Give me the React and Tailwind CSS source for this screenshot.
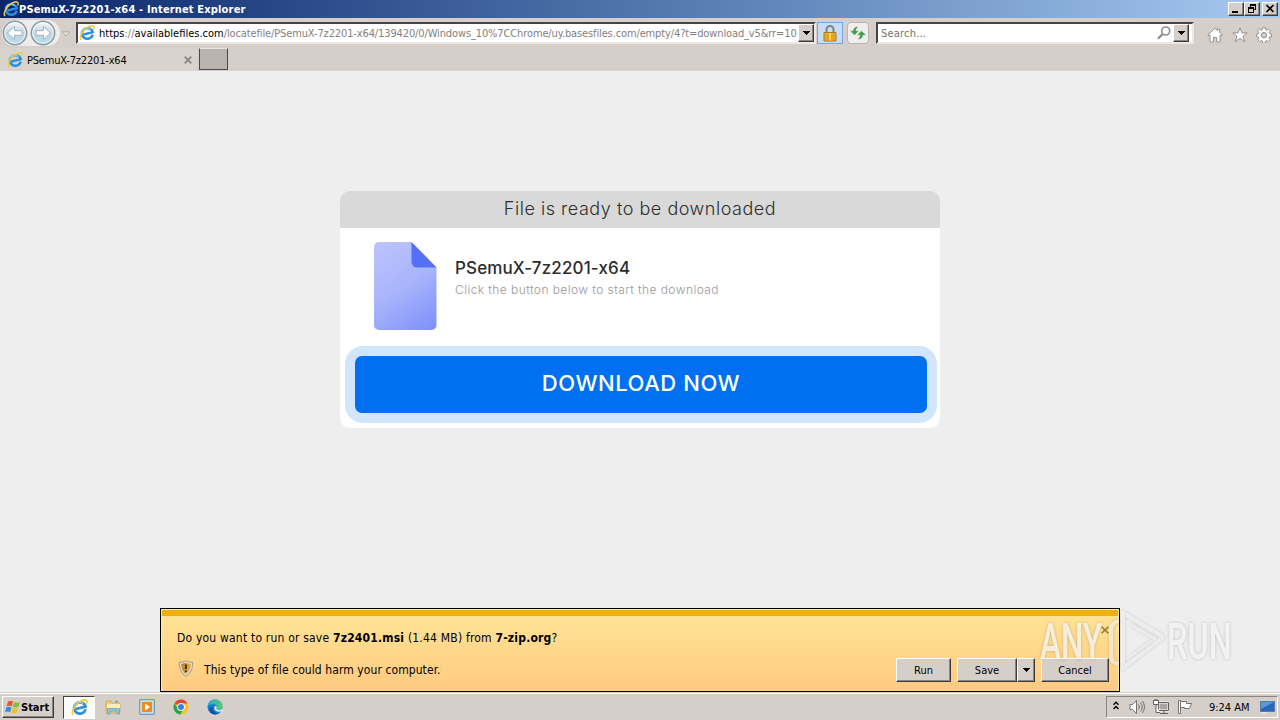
import { clsx } from "clsx";

/**
 * Internet Explorer window with a download page, plus the desktop taskbar.
 */

const bevel =
  "bg-[#d6cfc9] border border-t-white border-l-white border-r-[#403a3a] border-b-[#403a3a] shadow-[inset_-1px_-1px_0_#8b8580]";
const sunken =
  "bg-white border-2 border-t-[#4a4244] border-l-[#4a4244] border-r-[#ece8e4] border-b-[#ece8e4]";

function IeIcon({ className }) {
  return (
    <svg viewBox="0 0 16 16" className={className} fill="none">
      <g transform="rotate(-14 8 8.5)">
        <path d="M13.3 11A5.500 5.300 0 1 1 13.900 8.600H4.500" stroke="#2a8fdc" strokeWidth="2.500" />
        <path d="M3 7A5 5 0 0 1 12.500 6" stroke="#7fd0f5" strokeWidth="1.100" />
      </g>
      <path d="M2.200 15C-1.500 12.500 6.500 1 13 .8c2.700 0 2.300 2.200 1.600 3.600" stroke="#f3c936" strokeWidth="1.500" />
    </svg>
  );
}

function DownArrow() {
  return (
    <svg viewBox="0 0 8 4" className="w-2 h-1" shapeRendering="crispEdges">
      <path d="M0 0h8L4 4z" fill="#000" />
    </svg>
  );
}

function NavArrow({ flip }) {
  return (
    <svg viewBox="0 0 26 26" className={clsx("w-[26px] h-[26px]", flip && "-scale-x-100")}>
      <defs>
        <linearGradient id="nav" x1="0" y1="0" x2="0" y2="1">
          <stop offset="0" stopColor="#f6f8fa" />
          <stop offset=".5" stopColor="#c6d4e0" />
          <stop offset="1" stopColor="#b3dcee" />
        </linearGradient>
      </defs>
      <circle cx="13" cy="13" r="11.7" fill="url(#nav)" stroke="#8b989f" strokeWidth="1.4" />
      <circle cx="13" cy="13" r="10.2" fill="none" stroke="#fff" strokeOpacity=".7" />
      <path d="M5.500 13l7-6.500v4.200h7.500v4.600h-7.500v4.200z" fill="#fff" stroke="#9aabb8" strokeWidth=".9" />
    </svg>
  );
}

function TitleBar() {
  return (
    <header className="h-[18px] flex items-center pl-[3px] pr-[2px] bg-linear-to-r from-[#0a246a] to-[#a6caf0]">
      <IeIcon className="w-4 h-4" />
      <span className="flex-1 pt-[2px] text-white font-bold text-[11px] tracking-[0.16px] whitespace-nowrap">
        PSemuX-7z2201-x64 - Internet Explorer
      </span>
      <div className="flex">
        <span className={clsx(bevel, "w-4 h-[14px]")}>
          <svg viewBox="0 0 14 12" shapeRendering="crispEdges">
            <path d="M3 8h6v2H3z" />
          </svg>
        </span>
        <span className={clsx(bevel, "w-4 h-[14px]")}>
          <svg viewBox="0 0 14 12" shapeRendering="crispEdges">
            <path d="M5 1h6v6H9V6h1V3H6v1H5zM3 4h6v6H3zM4 6v3h4V6z" fillRule="evenodd" />
          </svg>
        </span>
        <span className={clsx(bevel, "w-4 h-[14px] ml-[2px]")}>
          <svg viewBox="0 0 14 12">
            <path d="M3.500 2l7 7M10.500 2l-7 7" stroke="#000" strokeWidth="1.700" />
          </svg>
        </span>
      </div>
    </header>
  );
}

function AddressRow() {
  return (
    <div className="h-[29px] flex items-start pt-[4px]">
      <div className="flex w-[58px] h-[26px] ml-[2px] -mt-[2px] rounded-full bg-[#eeeceb]">
        <NavArrow />
        <span className="ml-[2px]">
          <NavArrow flip />
        </span>
      </div>
      <svg viewBox="0 0 10 6" className="w-[10px] h-[6px] mt-[9px] ml-px">
        <path d="M1 .8h8L5 5z" fill="#e7e2df" stroke="#b3aba6" />
      </svg>

      <div className={clsx(sunken, "flex items-center w-[740px] h-[22px] ml-[5px]")}>
        <IeIcon className="w-4 h-4 ml-px mr-[4px] shrink-0" />
        <span className="pt-[2px] whitespace-nowrap text-[11px] tracking-[-0.125px] text-[#848080]">
          <span className="tracking-normal">
            <span className="text-black">https</span>://<span className="text-black">availablefiles.com</span>
          </span>
          /locatefile/PSemuX-7z2201-x64/139420/0/Windows_10%7CChrome/uy.basesfiles.com/empty/4?t=download_v5&amp;rr=10
        </span>
        <span className={clsx(bevel, "ml-auto w-4 h-[18px] shrink-0 flex items-center justify-center")}>
          <DownArrow />
        </span>
      </div>

      <span className="w-[26px] h-[22px] ml-px flex items-center justify-center border border-[#78a7df] bg-[#c5ddf8]">
        <svg viewBox="0 0 14 17" className="w-[14px] h-[17px]">
          <path d="M3.500 8V4.500a3.500 3.500 0 0 1 7 0V8" fill="none" stroke="#89826d" strokeWidth="2" />
          <path d="M1 7.500h12v8.500H1z" fill="#efb72c" stroke="#a27b22" />
          <path d="M1.500 10h11M1.500 12h11M1.500 14h11" stroke="#c98c13" strokeWidth=".8" />
          <path d="M6.200 8h1.600v7.500H6.200z" fill="#fbdc70" />
        </svg>
      </span>
      <span className="w-[22px] h-[22px] ml-[4px] flex items-center justify-center border border-[#bab4b0] rounded-sm bg-[#f0eeec]">
        <svg viewBox="0 0 16 14" className="w-4 h-[14px]" fill="#42a047" stroke="#287b35" strokeWidth=".4">
          <path d="M4.500 8.800L.8 5.200h2.700C3.500 2.800 4.500 1.300 7.500.9 6 2.200 5.600 3.500 5.600 5.200h2.600z" />
          <path d="M11.500 5.200l3.700 3.600h-2.700c0 2.400-1 3.900-4 4.300 1.500-1.300 1.900-2.600 1.900-4.300H7.800z" />
        </svg>
      </span>

      <div className={clsx(sunken, "flex items-center w-[318px] h-[22px] ml-[7px]")}>
        <span className="ml-[3px] pt-[2px] text-[11px] tracking-[0.2px] text-[#77716f]">Search...</span>
        <svg viewBox="0 0 14 14" className="w-[14px] h-[14px] ml-auto mr-[2px]" fill="none">
          <circle cx="8.700" cy="5" r="4" stroke="#8e8987" strokeWidth="1.600" />
          <path d="M5.700 8L1 12.800" stroke="#8e8987" strokeWidth="2.200" />
        </svg>
        <span className={clsx(bevel, "w-4 h-[18px] mr-[3px] flex items-center justify-center")}>
          <DownArrow />
        </span>
      </div>

      <div className="flex gap-[8.5px] ml-[13px] mt-[5px]">
        <svg viewBox="0 0 16 16" className="w-4 h-4" fill="#fff" stroke="#96908c">
          <path d="M.8 8L8 1l2.700 2.600V2h2v3.600L15.300 8l-1 1-1.200-1v7H9.700v-4.600H6.400V15H3V8L1.800 9z" />
        </svg>
        <svg viewBox="0 0 16 16" className="w-4 h-4" fill="#fff" stroke="#96908c">
          <path d="M8 .9l2 5h5.200l-4.100 3.300 1.600 5.500L8 11.400l-4.700 3.300 1.600-5.500L.8 5.900H6z" />
        </svg>
        <svg viewBox="0 0 16 16" className="w-4 h-4" fill="#fff" stroke="#96908c">
          <path d="M6.700.7h2.600l.4 2 1.100.5 1.700-1.200 1.800 1.800-1.100 1.700.4 1.200 2 .4v2.600l-2 .3-.4 1.200 1.100 1.700-1.800 1.800-1.700-1.100-1.100.5-.4 1.900H6.700l-.4-2-1.100-.4-1.700 1.100-1.800-1.800 1.100-1.700-.5-1.200-1.900-.3V7.100l2-.4.4-1.200-1.100-1.700L3.500 2l1.700 1.200 1.100-.5z" />
          <circle cx="8" cy="8.200" r="2.700" fill="#d6cfc9" />
        </svg>
      </div>
    </div>
  );
}

function TabRow() {
  return (
    <div className="h-6 flex items-start">
      <div className="w-[197px] h-[23px] mt-px flex items-center pl-[7px] bg-[#d9d3cd]">
        <IeIcon className="w-4 h-4 mr-[4px]" />
        <span className="pt-[3px] text-[11px] tracking-[-0.19px]">PSemuX-7z2201-x64</span>
        <svg viewBox="0 0 8 8" className="w-2 h-2 ml-auto mr-[5px]">
          <path d="M.7.7l6.600 6.600M7.300.7L.7 7.300" stroke="#8b8480" strokeWidth="1.800" />
        </svg>
      </div>
      <span className="w-[29px] h-[22px] mt-px ml-[2px] bg-[#bab2ad] border border-t-[#e6e2df] border-l-[#4e4848] border-r-[#4e4848] border-b-[#4e4848]" />
    </div>
  );
}

function FileIcon() {
  return (
    <svg viewBox="0 0 63 88" className="w-[63px] h-[88px]">
      <defs>
        <linearGradient id="sheet" x1="0" y1="0" x2="63" y2="88" gradientUnits="userSpaceOnUse">
          <stop offset="0" stopColor="#bec5fd" />
          <stop offset=".5" stopColor="#a8b4fb" />
          <stop offset="1" stopColor="#7d8ef9" />
        </linearGradient>
      </defs>
      <path d="M5 0h32.500L62.500 25.500V83a5 5 0 0 1-5 5H5a5 5 0 0 1-5-5V5a5 5 0 0 1 5-5z" fill="url(#sheet)" />
      <path d="M37.500 0L62.500 25.500H43a5.500 5.500 0 0 1-5.500-5.500z" fill="#5570f6" />
    </svg>
  );
}

function DownloadCard() {
  return (
    <section className="w-[600px] h-[237px] mt-[120px] mx-auto rounded-[10px] overflow-hidden bg-white font-['Inter',sans-serif]">
      <h1 className="h-[37px] leading-[36px] text-center text-[18px] font-light tracking-[0.53px] text-[#2e2e2e] bg-[#d9d9d9]">
        File is ready to be downloaded
      </h1>
      <div className="flex h-[118px] pt-[14px] pl-[33.5px]">
        <FileIcon />
        <div className="ml-[18.5px] pt-[15px] whitespace-nowrap">
          <h2 className="text-[17px] leading-[22px] font-medium tracking-[0.13px] text-[#2c2c2c]">PSemuX-7z2201-x64</h2>
          <p className="text-[12px] leading-[22px] font-light tracking-[0.43px] text-[#999]">
            Click the button below to start the download
          </p>
        </div>
      </div>
      <div className="w-[592px] h-[77px] ml-[5px] p-[10px] rounded-[18px] bg-[#d1e5fb]">
        <button className="w-full h-full pb-[3px] rounded-[7px] bg-[#0070f0] text-white text-[22px] font-medium tracking-[0.55px]">
          DOWNLOAD NOW
        </button>
      </div>
    </section>
  );
}

function DownloadNotice() {
  const btn = clsx(bevel, "h-6 text-[11px] pt-[3px]");
  return (
    <aside className="w-[960px] h-[84px] mt-auto mx-auto flex flex-col border border-black bg-[#ffe9a8] p-px pb-0">
      <div className="h-[6px] bg-[#f0b00a]" />
      <div className="flex-1 bg-linear-to-b from-[#ffe394] to-[#ffca81] pl-[15px] pr-[9px]">
        <div className="h-[42px] flex items-center justify-between text-[12px] tracking-[0.2px]">
          <p className="pt-[2px] whitespace-nowrap">
            Do you want to run or save <b>7z2401.msi</b> (1.44 MB) from <b>7-zip.org</b>?
          </p>
          <svg viewBox="0 0 8 8" className="w-2 h-2 -mt-[14px]">
            <path d="M.7.7l6.600 6.600M7.300.7L.7 7.300" stroke="#92783c" strokeWidth="1.600" />
          </svg>
        </div>
        <div className="flex items-center h-6">
          <svg viewBox="0 0 16 18" className="w-4 h-[17px] mr-[10px] -mt-[3px] ml-px">
            <path d="M8 .8c2.200 1.200 4.500 1.600 7 1.600 0 6.500-1.500 11.500-7 14.800C2.500 13.900 1 8.900 1 2.400c2.500 0 4.800-.4 7-1.600z" fill="#e6dfc8" stroke="#99958b" />
            <path d="M8 3c1.700.8 3.300 1.200 5 1.300-.2 4.700-1.600 8.200-5 10.500-3.400-2.300-4.800-5.800-5-10.500C4.700 4.200 6.300 3.800 8 3z" fill="#dfa437" />
            <path d="M8 3v11.800c-3.400-2.300-4.800-5.800-5-10.500C4.700 4.200 6.300 3.800 8 3z" fill="#b98b3d" />
            <path d="M8 4.800v4.700M8 11v1.800" stroke="#45270c" strokeWidth="1.900" />
          </svg>
          <p className="flex-1 text-[12px] tracking-[0.08px] -mt-px">This type of file could harm your computer.</p>
          <button className={clsx(btn, "w-[55px]")}>Run</button>
          <button className={clsx(btn, "w-[60px] ml-[6px]")}>Save</button>
          <button className={clsx(bevel, "w-[18px] h-6 flex items-center justify-center")}>
            <DownArrow />
          </button>
          <button className={clsx(btn, "w-[68px] ml-[6px]")}>Cancel</button>
        </div>
      </div>
    </aside>
  );
}

function Watermark() {
  return (
    <svg
      viewBox="0 0 208 70"
      className="absolute left-[1034px] top-[605px] w-[208px] h-[70px] pointer-events-none drop-shadow-[0_0_1.5px_#00000044]"
    >
      <defs>
        <linearGradient id="mark" x1="0" y1="15" x2="0" y2="56" gradientUnits="userSpaceOnUse">
          <stop offset="0" stopColor="#fff" stopOpacity=".75" />
          <stop offset=".5" stopColor="#fff" stopOpacity=".65" />
          <stop offset="1" stopColor="#fff" stopOpacity=".35" />
        </linearGradient>
      </defs>
      <g fill="url(#mark)" fontFamily="Roboto, sans-serif" fontSize="50" fontWeight="500">
        <text transform="translate(6 54) scale(.63 1)">ANY</text>
        <text transform="translate(133 54) scale(.65 1)">RUN</text>
      </g>
      <g fill="none" strokeLinejoin="round">
        <path d="M85 16q-8 1-8 9v25q0 8 8 9" stroke="#fff" strokeOpacity=".6" strokeWidth="4" />
        <path d="M89 8l39 23v2L89 63z" stroke="#fff" strokeOpacity=".6" strokeWidth="4" />
        <path d="M97 20l24 14-24 17" stroke="#fff" strokeOpacity=".45" strokeWidth="3" />
      </g>
    </svg>
  );
}

function Taskbar() {
  return (
    <footer className="h-7 flex items-center pt-px px-[2px] bg-[#d6cfc9] border-t border-[#d6cfc9] shadow-[inset_0_1px_0_#fff]">
      <button className={clsx(bevel, "w-[52px] h-[22px] flex items-center pl-[2px] text-[11px] font-bold")}>
        <svg viewBox="0 0 16 16" className="w-4 h-4 shrink-0">
          <path d="M3 2.500c2-1.100 3.500-.9 5 .1L6.700 7.500c-1.600-1-3-1.100-5-.2z" fill="#e9582c" />
          <path d="M9 3c2 .9 3.700.9 5.800 0l-1.300 4.800c-2 .9-3.600.8-5.700-.1z" fill="#83bd3e" />
          <path d="M1.400 8.300c2-.9 3.500-.8 5 .2l-1.300 4.800c-1.500-1-3-1.100-5-.2z" fill="#348bdc" />
          <path d="M7.500 8.800c2 1 3.700.9 5.700.1l-1.300 4.800c-2 .9-3.700.9-5.700-.1z" fill="#f3bd29" />
        </svg>
        <span className="pt-[2px]">Start</span>
      </button>
      <div className="w-[32px] h-[23px] ml-[9px] flex items-center justify-center bg-[#fcfbfa] border border-t-[#444] border-l-[#444] border-r-white border-b-white">
        <IeIcon className="w-[17px] h-[17px]" />
      </div>
      <svg viewBox="0 0 17 16" className="w-[17px] h-4 ml-[10px]">
        <path d="M1 2h5l1 2h8v10H1z" fill="#edcf70" stroke="#c6a14a" strokeWidth=".7" />
        <path d="M2 5h13v5H2z" fill="#fbefb3" />
        <path d="M2.500 15V9.500h12V15H12v-3H5v3z" fill="#8fc9e5" stroke="#5c9abf" strokeWidth=".7" />
        <path d="M10 2.500h3" stroke="#3bb0d9" strokeWidth="1.500" />
      </svg>
      <svg viewBox="0 0 16 16" className="w-4 h-4 ml-[17px]">
        <path d="M.7.7h14.600v14.600H.7z" fill="#c8ddec" stroke="#5b93c8" />
        <path d="M3 3h10v10H3z" fill="#f18a1b" />
        <path d="M6 4.500l5.200 3.500L6 11.500z" fill="#fff" />
      </svg>
      <svg viewBox="0 0 16 16" className="w-4 h-4 ml-[18px]">
        <circle cx="8" cy="8" r="7.500" fill="#fbc517" />
        <path d="M8 8L1.500 4.200A7.500 7.500 0 0 1 14.500 4.500H8z" fill="#df4937" />
        <path d="M1.500 4.200A7.500 7.500 0 0 0 7.200 15.500L11 9.700 8 8l-3 2z" fill="#2ba24c" />
        <circle cx="8" cy="8" r="3.900" fill="#fff" />
        <circle cx="8" cy="8" r="3" fill="#3b7ded" />
      </svg>
      <svg viewBox="0 0 16 16" className="w-4 h-4 ml-[18px]">
        <defs>
          <linearGradient id="edge" x1="0" x2="1">
            <stop offset="0" stopColor="#22a5df" />
            <stop offset="1" stopColor="#5ecb6c" />
          </linearGradient>
        </defs>
        <circle cx="8" cy="8" r="7.500" fill="#167bc4" />
        <path d="M.6 7.500C1.300-2 15.500-1.500 15.500 7c0 3.500-4 4.200-6.300 3 1.600-2.300.5-4.600-2-4.700C4 5 1.300 6 .6 7.500z" fill="url(#edge)" />
        <path d="M9.200 10c2 1.300 4.500.8 6.300-.6v3.200L13 12.500c-4 1-6.600-2-5.500-4.700.3-.8 1.500-1 2-.3.500.8.300 1.700-.3 2.500z" fill="#d6e9ef" />
        <path d="M5.500 7.500c-1 4 2 7 6.500 6.800C8.500 16.500 4 15.300 2.800 11.500c-.4-1.500.7-3.500 2.700-4z" fill="#114e9e" />
      </svg>

      <div className="w-[172px] h-[22px] ml-auto flex items-center border border-t-[#8b8580] border-l-[#8b8580] border-r-white border-b-white pl-[6px]">
        <svg viewBox="0 0 6 9" className="w-[6px] h-[9px] -mt-[3px]" fill="none" stroke="#000" strokeWidth="1.400">
          <path d="M.5 3.800L3 1.300l2.500 2.500M.5 8L3 5.500 5.500 8" />
        </svg>
        <svg viewBox="0 0 16 16" className="w-4 h-4 ml-[10px]" fill="none" stroke="#77716e">
          <path d="M1 5.500h2.500L7.500 1.500v13l-4-4H1z" fill="#fff" />
          <path d="M9.500 5.500q2 2.500 0 5M11.500 3.500q3.500 4.500 0 9M13.500 2q4 6 0 12" />
        </svg>
        <svg viewBox="0 0 16 16" className="w-4 h-4 ml-[8px]" fill="none" stroke="#655f5d">
          <path d="M5.500 3.500h10v8h-10z" fill="#aaa6a3" stroke="#fff" strokeWidth="2" />
          <path d="M5.500 3.500h10v8h-10zM7 14.500h8M11 12v2" />
          <path d="M.5 1.500h5v4h-5zM2 0v1.500M4 0v1.500M3 5.500v8h4" fill="#fff" />
        </svg>
        <svg viewBox="0 0 16 16" className="w-4 h-4 ml-[8px]" stroke="#77716e">
          <path d="M3.500 2.500h6v2h5l-2 5h-5v-1h-4z" fill="#fff" />
          <path d="M1.500 1.500h2v13h-2z" fill="#fff" />
        </svg>
        <time className="ml-[16px] pt-[2px] text-[11px] tracking-[-0.02px] whitespace-nowrap">9:24 AM</time>
        <svg viewBox="0 0 15 13" className="w-[15px] h-[13px] ml-auto mr-[2px] shrink-0">
          <path d="M.5.500h14v10H.5z" fill="#2768b8" stroke="#557da9" />
          <path d="M1 1h13L1 8z" fill="#5b98db" />
          <path d="M1 11h6v1.500H1z" fill="#dce8ef" />
        </svg>
      </div>
    </footer>
  );
}

export default function App() {
  return (
    <div className="relative w-[1280px] h-[720px] overflow-hidden flex flex-col bg-[#d6cfc9] text-black font-['DejaVu_Sans_Condensed','DejaVu_Sans',sans-serif]">
      <TitleBar />
      <AddressRow />
      <TabRow />
      <main className="flex-1 flex flex-col bg-[#eeeeee]">
        <DownloadCard />
        <DownloadNotice />
      </main>
      <Taskbar />
      <Watermark />
    </div>
  );
}
